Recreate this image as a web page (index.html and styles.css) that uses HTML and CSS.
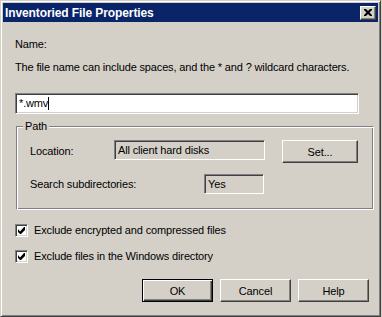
FILE: index.html
```html
<!DOCTYPE html>
<html lang="en">

<head>
    <meta charset="UTF-8">
    <meta name="viewport" content="width=device-width, initial-scale=1.0">
    <title>Inventoried File Properties</title>
    <link rel="stylesheet" href="styles.css">
</head>

<body>
    <div class="window">
        <div class="titlebar">
            <span class="title">Inventoried File Properties</span>
            <button class="close" aria-label="Close">
                <svg width="8" height="7" viewBox="0 0 8 7">
                    <path d="M0 0h2l2 2 2-2h2v1l-2.5 2.5L8 6v1H6L4 5 2 7H0V6l2.5-2.5L0 1z" fill="#000" />
                </svg>
            </button>
        </div>

        <div class="dialog">
            <div class="text name">Name:</div>
            <div class="text hint">The file name can include spaces, and the * and ? wildcard characters.</div>
            <div class="textbox">*.wmv<span class="caret"></span></div>

            <div class="group">
                <span class="group-title">Path</span>
                <div class="row first">
                    <span class="row-label loc-label">Location:</span>
                    <div class="readonly location">All client hard disks</div>
                    <button class="btn set">Set...</button>
                </div>
                <div class="row">
                    <span class="row-label sub-label">Search subdirectories:</span>
                    <div class="readonly yes">Yes</div>
                </div>
            </div>

            <label class="check first-check">
                <span class="box">
                    <svg width="7" height="7" viewBox="0 0 7 7">
                        <path d="M6 0h1v3l-4 4H2L0 5V2l2 2.5z" fill="#000" />
                    </svg>
                </span>
                Exclude encrypted and compressed files
            </label>
            <label class="check">
                <span class="box">
                    <svg width="7" height="7" viewBox="0 0 7 7">
                        <path d="M6 0h1v3l-4 4H2L0 5V2l2 2.5z" fill="#000" />
                    </svg>
                </span>
                Exclude files in the Windows directory
            </label>

            <div class="actions">
                <button class="btn default">OK</button>
                <button class="btn">Cancel</button>
                <button class="btn">Help</button>
            </div>
        </div>
    </div>
</body>

</html>
```

FILE: styles.css
```css
body {
    margin: 0;
    font-family: 'Liberation Sans', Arial, sans-serif;
    font-size: 11px;
    letter-spacing: -0.15px;
    color: #000;
    background-color: #d4d0c8;
}

.window {
    box-sizing: border-box;
    width: 381px;
    height: 317px;
    padding: 2px;
    background-color: #d4d0c8;
    border: 1px solid;
    border-color: #d4d0c8 #404040 #404040 #d4d0c8;
    box-shadow: inset 1px 1px #fff, inset -1px -1px #808080;
}

.titlebar {
    display: flex;
    align-items: center;
    justify-content: space-between;
    height: 19px;
    padding: 0 2px 0 2px;
    background-color: #0a246a;
}

.title {
    color: #fff;
    font-weight: bold;
    font-size: 12px;
    letter-spacing: -0.1px;
}

.close {
    display: flex;
    align-items: center;
    justify-content: center;
    box-sizing: border-box;
    width: 16px;
    height: 14px;
    padding: 0;
    background-color: #d4d0c8;
    border: 1px solid;
    border-color: #fff #404040 #404040 #fff;
    box-shadow: inset -1px -1px #808080;
}

.dialog {
    padding: 16px 0 0 12px;
}

.text {
    line-height: 13px;
}

.hint {
    margin-top: 10px;
}

.textbox {
    box-sizing: border-box;
    width: 344px;
    height: 21px;
    margin-top: 19px;
    padding: 3px 0 0 3px;
    background-color: #fff;
    border: 1px solid;
    border-color: #808080 #fff #fff #808080;
    box-shadow: inset 1px 1px #404040, inset -1px -1px #d4d0c8;
    line-height: 13px;
}

.caret {
    display: inline-block;
    width: 1px;
    height: 13px;
    vertical-align: top;
    background-color: #000;
}

.group {
    position: relative;
    box-sizing: border-box;
    width: 358px;
    height: 84px;
    margin: 12px 0 0 1px;
    padding: 13px 0 0 13px;
    border: 1px solid;
    border-color: #808080 #fff #fff #808080;
    box-shadow: inset 1px 1px #fff, inset -1px -1px #808080;
}

.group-title {
    position: absolute;
    top: -7px;
    left: 6px;
    padding: 0 2px;
    line-height: 13px;
    background-color: #d4d0c8;
}

.row {
    display: flex;
    align-items: flex-start;
    margin-top: 11px;
}

.row.first {
    margin-top: 0;
}

.row-label {
    line-height: 23px;
}

.loc-label {
    width: 84px;
}

.sub-label {
    width: 174px;
    line-height: 20px;
}

.readonly {
    box-sizing: border-box;
    height: 20px;
    padding: 3px 0 0 3px;
    line-height: 13px;
    border: 1px solid;
    border-color: #808080 #fff #fff #808080;
    box-shadow: inset 1px 1px #404040;
}

.location {
    width: 151px;
}

.yes {
    width: 60px;
}

.btn {
    box-sizing: border-box;
    width: 71px;
    height: 23px;
    padding: 0;
    font-family: inherit;
    font-size: 11px;
    letter-spacing: inherit;
    color: #000;
    background-color: #d4d0c8;
    border: 1px solid;
    border-color: #fff #404040 #404040 #fff;
    box-shadow: inset -1px -1px #808080, inset 1px 1px #d4d0c8;
}

.btn.set {
    width: 76px;
    margin-left: 17px;
}

.btn.default {
    border-color: #000;
    box-shadow: inset 1px 1px #fff, inset -1px -1px #404040, inset -2px -2px #808080;
}

.check {
    display: flex;
    align-items: center;
    gap: 6px;
    height: 13px;
    margin-top: 13px;
    line-height: 13px;
}

.check.first-check {
    margin-top: 14px;
}

.box {
    display: flex;
    align-items: center;
    justify-content: center;
    box-sizing: border-box;
    width: 13px;
    height: 13px;
    background-color: #fff;
    border: 1px solid;
    border-color: #808080 #fff #fff #808080;
    box-shadow: inset 1px 1px #404040, inset -1px -1px #d4d0c8;
}

.actions {
    display: flex;
    justify-content: flex-end;
    gap: 7px;
    width: 354px;
    margin-top: 16px;
}
```
